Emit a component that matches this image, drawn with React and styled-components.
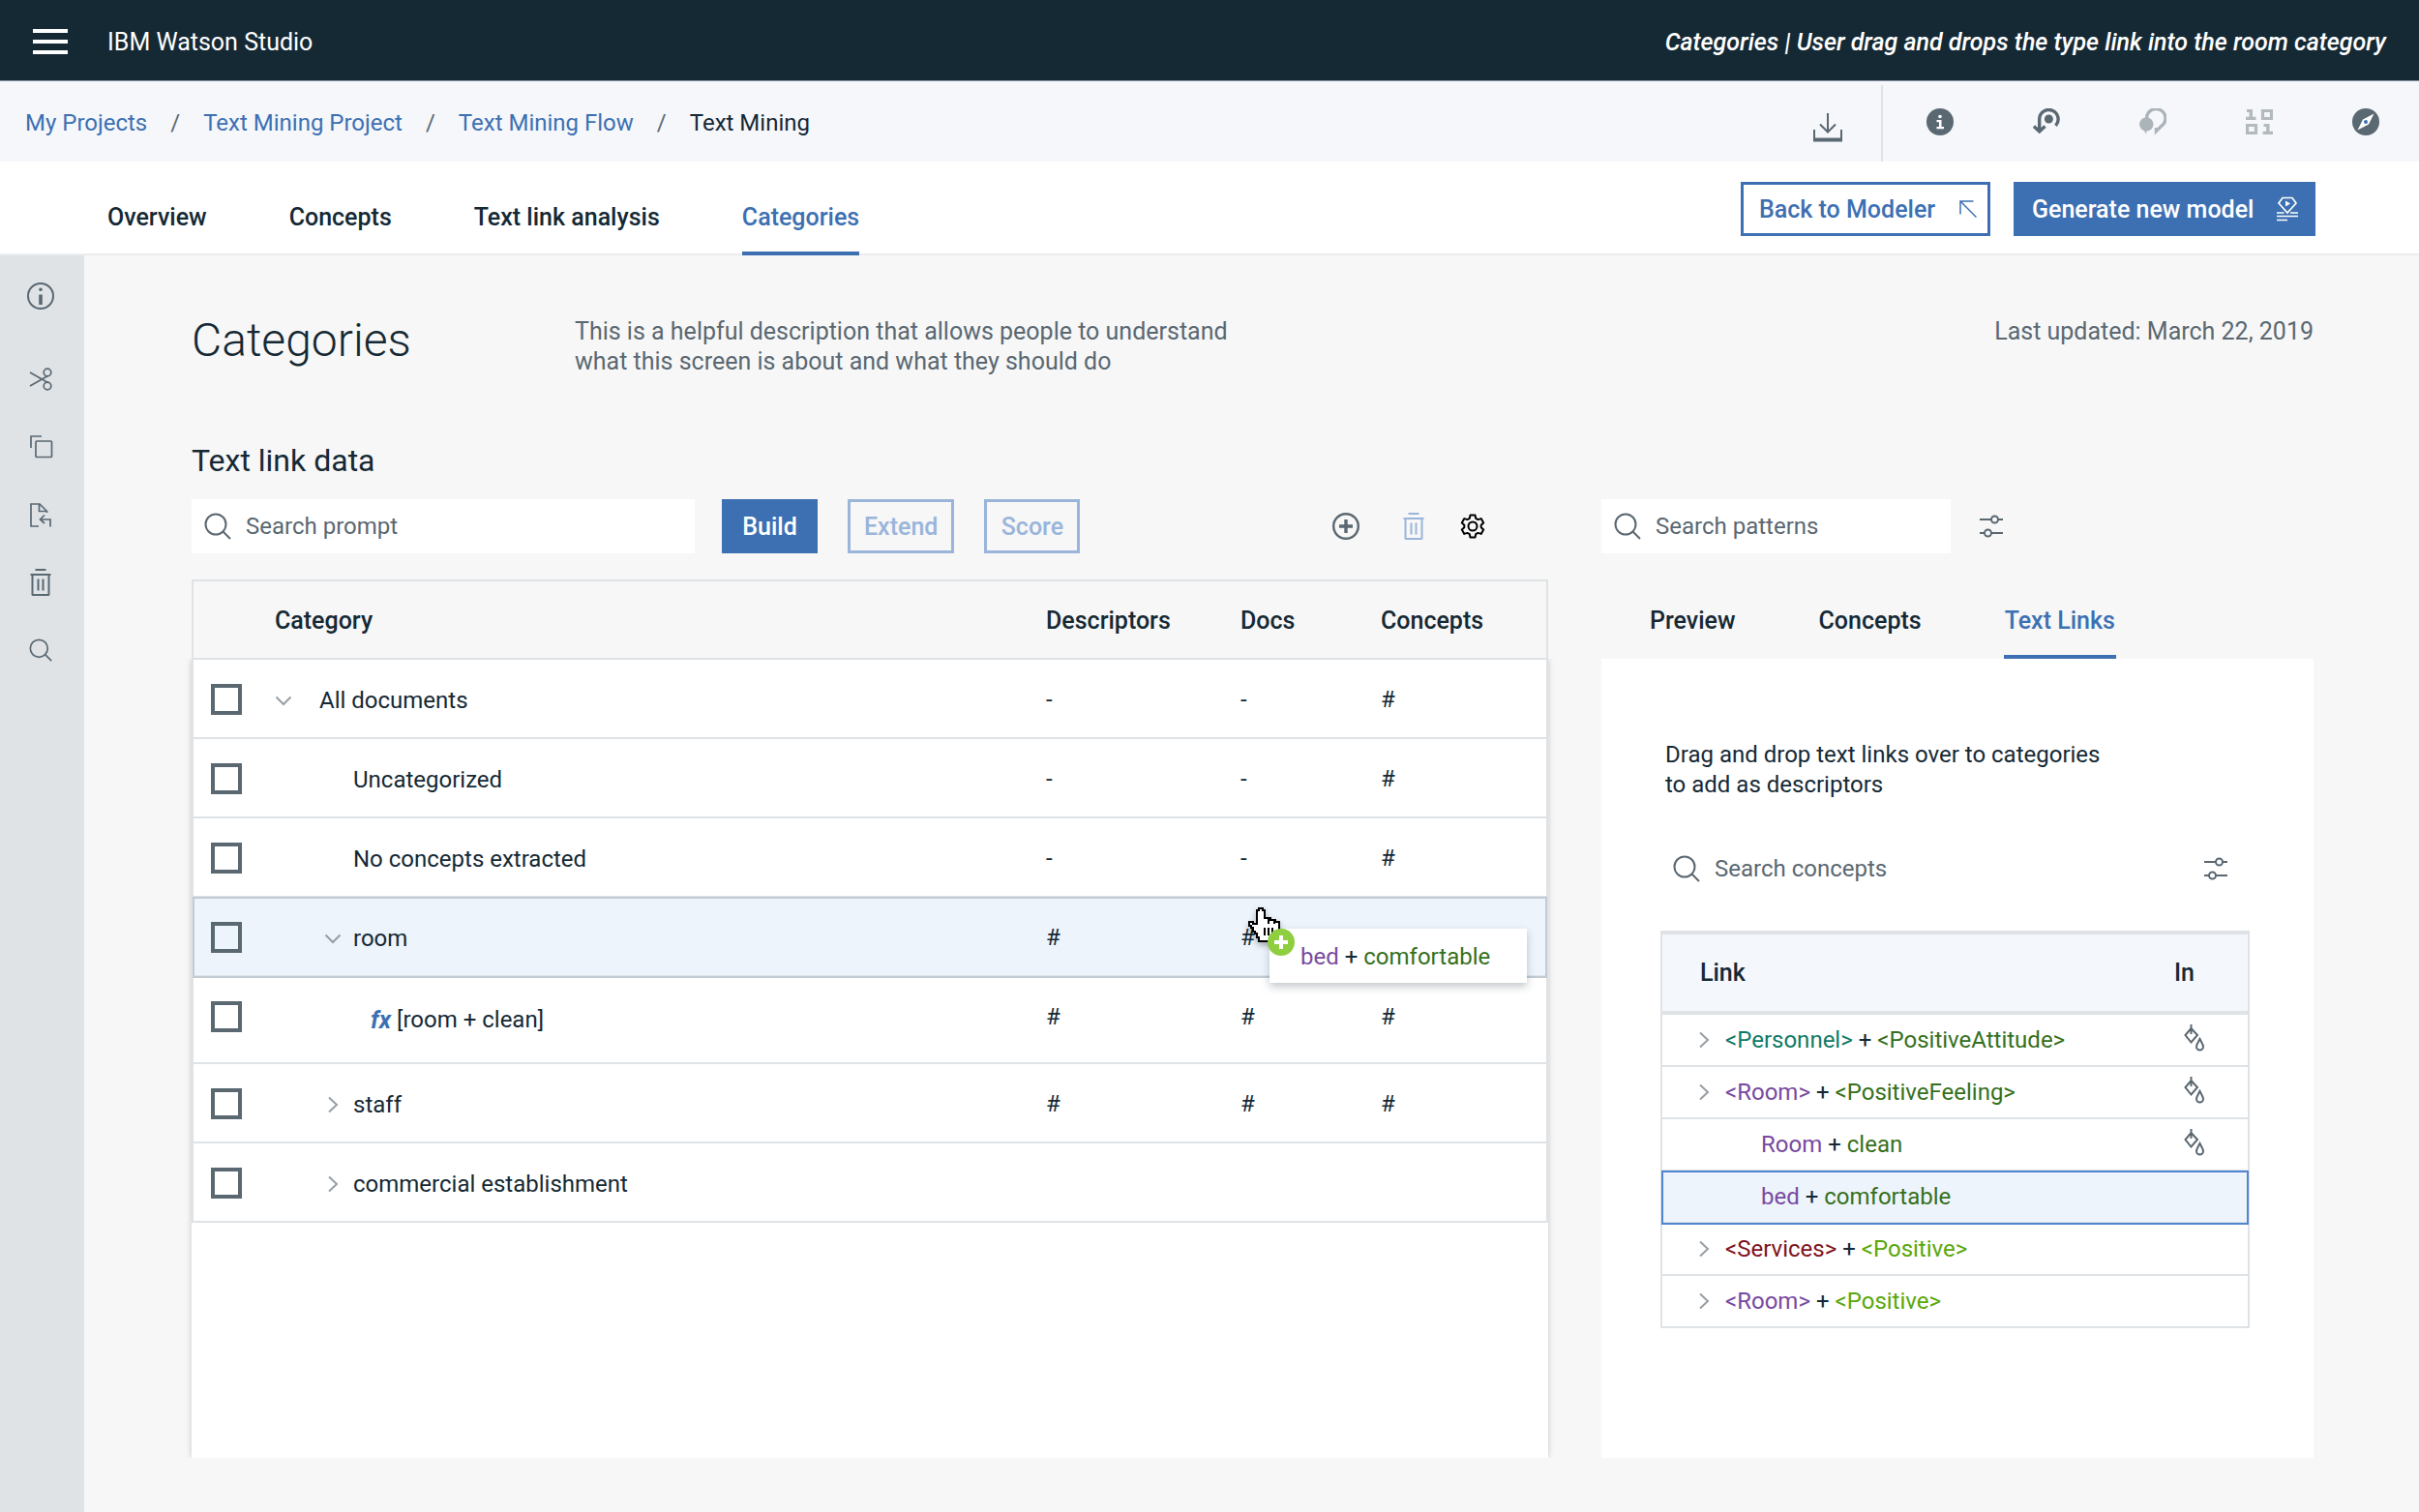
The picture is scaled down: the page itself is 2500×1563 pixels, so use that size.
import React from "react";
import styled, { createGlobalStyle, css } from "styled-components";

const color = {
  ink: "#152935",
  muted: "#5a6872",
  blue: "#3d70b2",
  blueSoft: "#9ab5da",
  line: "#dfe3e6",
  page: "#f7f7f7",
  bar: "#f5f7fb",
  selected: "#edf4fc",
  purple: "#784a9f",
  green: "#36701c",
  teal: "#107a66",
  red: "#7f1220",
  lime: "#5aa70a",
};

const GlobalStyle = createGlobalStyle`
  *, *::before, *::after { box-sizing: border-box; }
  body { margin: 0; background: ${color.page}; }
  body, button, input { font-family: Roboto, "Liberation Sans", sans-serif; }
  body { font-size: 24px; line-height: 31px; color: ${color.ink}; }
  svg { display: block; flex: none; }
`;

const Page = styled.div`
  min-height: 100vh;
  display: flex;
  flex-direction: column;
`;

const bareButton = css`
  appearance: none;
  border: 0;
  margin: 0;
  padding: 0;
  background: none;
  color: inherit;
  cursor: pointer;
  display: inline-flex;
  align-items: center;
  justify-content: center;
`;

/* Header */
const TopBar = styled.header`
  height: 84px;
  padding: 3px 34px 0;
  display: flex;
  align-items: center;
  background: ${color.ink};
  color: #fff;
  font-size: 25px;
  border-bottom: 1px solid #8a98a3;
`;

const MenuButton = styled.button`
  ${bareButton}
  margin-right: 41px;
`;

const Product = styled.span`
  flex: 1;
`;

const Caption = styled.span`
  font-style: italic;
  font-weight: 500;
`;

const CrumbBar = styled.div`
  height: 83px;
  padding-left: 26px;
  display: flex;
  align-items: center;
  background: ${color.bar};
`;

const Crumbs = styled.ol`
  list-style: none;
  flex: 1;
  margin: 0;
  padding: 4px 0 0;
  display: flex;

  li + li::before {
    content: "/";
    margin: 0 24px;
    color: ${color.muted};
  }
  a {
    color: ${color.blue};
    text-decoration: none;
  }
`;

const IconButton = styled.button`
  ${bareButton}
  color: ${(p) => p.$tone || color.muted};
  width: ${(p) => p.$size || 28}px;
  height: ${(p) => p.$size || 28}px;
`;

const Download = styled(IconButton)`
  width: 30px;
  height: 30px;
  margin: 12px 40px 0 0;
`;

const HeaderTools = styled.div`
  align-self: stretch;
  margin-top: 4px;
  padding: 0 41px 4px 45px;
  display: flex;
  align-items: center;
  gap: 82px;
  border-left: 2px solid ${color.line};
`;

/* Tabs */
const TabBar = styled.div`
  height: 97px;
  padding: 0 107px 0 111px;
  display: flex;
  align-items: flex-end;
  background: #fff;
  border-bottom: 2px solid #ebedee;
`;

const Tabs = styled.nav`
  flex: 1;
  display: flex;
  gap: 85px;
  margin-bottom: -2px;
`;

const tabText = css`
  font-size: 25px;
  line-height: 31px;
  font-weight: 500;
  color: ${(p) => (p.$active ? color.blue : color.ink)};
  border-bottom: 4px solid ${(p) => (p.$active ? color.blue : "transparent")};
`;

const TabLink = styled.a`
  ${tabText}
  padding-bottom: 20px;
  text-decoration: none;
`;

const Actions = styled.div`
  display: flex;
  gap: 24px;
  margin-bottom: 18px;
`;

const Button = styled.button`
  ${bareButton}
  height: 56px;
  min-width: 99px;
  padding: 0 14px;
  font-size: 25px;
  font-weight: 500;
  border: 3px solid ${(p) => (p.disabled ? color.blueSoft : color.blue)};
  background: ${(p) => (p.$primary ? color.blue : "transparent")};
  color: ${(p) => (p.$primary ? "#fff" : p.disabled ? color.blueSoft : color.blue)};
`;

const WideButton = styled(Button)`
  min-width: ${(p) => p.$min}px;
  padding: 0 ${(p) => p.$end}px 0 16px;
  justify-content: space-between;
`;

/* Body */
const Body = styled.div`
  flex: 1;
  display: flex;
`;

const Sidebar = styled.nav`
  width: 87px;
  padding: 28px 0 0 28px;
  display: flex;
  flex-direction: column;
  align-items: flex-start;
  gap: 42px;
  background: ${color.line};
`;

const SidebarInfo = styled(IconButton)`
  margin-bottom: 16px;
`;

const Main = styled.main`
  flex: 1;
  min-width: 0;
  padding: 63px 109px 56px 111px;
  display: flex;
  flex-direction: column;
`;

const Hero = styled.div`
  display: flex;
  align-items: flex-start;
  font-size: 25px;
  color: ${color.muted};
`;

const Title = styled.h1`
  margin: 0;
  width: 396px;
  font-size: 48px;
  line-height: 50px;
  font-weight: 300;
  color: ${color.ink};
`;

const Lead = styled.p`
  margin: 0;
  max-width: 700px;
`;

const Updated = styled.span`
  margin-left: auto;
`;

const SectionTitle = styled.h2`
  margin: 69px 0 22px;
  font-size: 32px;
  line-height: 36px;
  font-weight: 400;
`;

const Columns = styled.div`
  flex: 1;
  display: grid;
  grid-template-columns: minmax(0, 1402fr) minmax(0, 736fr);
  column-gap: 55px;
`;

const Column = styled.section`
  min-width: 0;
  display: flex;
  flex-direction: column;
`;

const Toolbar = styled.div`
  height: 56px;
  margin-bottom: 27px;
  padding-right: ${(p) => p.$end || 0}px;
  display: flex;
  align-items: center;
`;

const ButtonRow = styled.div`
  flex: 1;
  display: flex;
  gap: 31px;
  margin-left: 28px;
`;

const ToolIcons = styled.div`
  display: flex;
  align-items: center;
  gap: 34px;
`;

const AddButton = styled(IconButton)`
  margin-right: 8px;
`;

const SearchBox = styled.label`
  width: ${(p) => p.$width};
  height: 56px;
  padding-left: 13px;
  display: flex;
  align-items: center;
  gap: 15px;
  background: #fff;
  color: ${color.muted};
`;

const SearchInput = styled.input`
  flex: 1;
  min-width: 0;
  border: 0;
  padding: 0;
  outline: 0;
  background: transparent;
  font-size: 24px;
  color: ${color.ink};
  &::placeholder {
    color: ${color.muted};
    opacity: 1;
  }
`;

/* Category table */
const Card = styled.div`
  flex: 1;
  position: relative;
  z-index: 0;
  &::before {
    content: "";
    position: absolute;
    z-index: -1;
    inset: 82px 0 0;
    background: #fff;
    box-shadow: 0 0 6px rgba(21, 41, 53, 0.22);
    clip-path: inset(0 -8px 0 -8px);
  }
`;

const CategoryTable = styled.table`
  width: 100%;
  table-layout: fixed;
  border-spacing: 0;
  border: 2px solid ${color.line};
  border-bottom: 0;
  text-align: left;

  th {
    height: 81px;
    padding: 2px 0 0;
    font-size: 25px;
    font-weight: 500;
    background: ${color.page};
    border-bottom: 2px solid ${color.line};
  }
`;

const Row = styled.tr`
  td {
    height: ${(p) => (p.$tall ? 90 : 82)}px;
    padding: 2px 0 ${(p) => (p.$tall ? 8 : 0)}px;
    border-bottom: 2px solid ${color.line};
    background: ${(p) => (p.$selected ? color.selected : "transparent")};
  }
  outline: ${(p) => (p.$selected ? "2px solid #c3cbd3" : "0")};
  outline-offset: -1px;
`;

const Check = styled.input`
  appearance: none;
  display: block;
  width: 32px;
  height: 32px;
  margin: 0 0 0 18px;
  border: 4px solid ${color.muted};
  cursor: pointer;
`;

const Label = styled.div`
  display: flex;
  align-items: center;
  gap: 12px;
  margin-top: ${(p) => (p.$low ? 6 : 2)}px;
  padding-left: ${(p) => p.$indent}px;
`;

const Expander = styled.button`
  ${bareButton}
  width: 18px;
  height: 18px;
  margin-right: ${(p) => p.$gap || 0}px;
  color: #979fa5;
`;

const Fx = styled.span`
  font-size: 25px;
  font-style: italic;
  font-weight: 700;
  color: ${color.blue};
  margin-right: -6px;
`;

const DragChip = styled.div`
  position: absolute;
  top: 361px;
  right: 22px;
  width: 266px;
  height: 56px;
  padding: 2px 0 0 32px;
  display: flex;
  align-items: center;
  background: #fff;
  box-shadow: 0 4px 8px rgba(21, 41, 53, 0.25);
  white-space: pre;
`;

const Cursor = styled.svg`
  position: absolute;
  left: -24px;
  top: -22px;
  filter: drop-shadow(0 3px 3px rgba(0, 0, 0, 0.3));
`;

const AddBadge = styled.svg`
  position: absolute;
  left: -2px;
  top: 0;
`;

/* Right panel */
const PanelTabs = styled.div`
  height: 82px;
  padding-left: 49px;
  display: flex;
  align-items: flex-end;
  gap: 84px;
`;

const PanelTab = styled.button`
  ${bareButton}
  ${tabText}
  padding: 0 1px 20px;
`;

const Panel = styled.div`
  flex: 1;
  padding: 84px 66px 0 61px;
  background: #fff;
`;

const Hint = styled.p`
  margin: 0 0 43px;
  padding-left: 5px;
  max-width: 480px;
`;

const PanelSearch = styled.div`
  display: flex;
  align-items: center;
  padding-right: 22px;
  margin-bottom: 36px;
`;

const LinkTable = styled.table`
  width: 100%;
  table-layout: fixed;
  border-spacing: 0;
  border: 2px solid ${color.line};
  border-top-width: 4px;
  border-bottom: 0;
  text-align: left;

  th {
    height: 83px;
    padding: 0;
    font-size: 25px;
    font-weight: 500;
    background: #f4f7fc;
    border-bottom: 4px solid ${color.line};
  }
  th:first-child {
    padding-left: 39px;
  }
`;

const LinkRow = styled.tr`
  td {
    height: 54px;
    padding: 0;
    border-bottom: 2px solid ${color.line};
    background: ${(p) => (p.$selected ? color.selected : "transparent")};
  }
  outline: ${(p) => (p.$selected ? "2px solid #4f86cf" : "0")};
  outline-offset: -1px;
`;

const LinkCell = styled.div`
  display: flex;
  align-items: center;
  gap: 13px;
  padding-left: ${(p) => (p.$child ? 102 : 34)}px;
`;

const UseMark = styled.span`
  display: block;
  padding: 0 0 4px 10px;
  color: ${color.muted};
`;

const Term = styled.span`
  color: ${(p) => color[p.$tone]};
`;

const stroke = { fill: "none", stroke: "currentColor", strokeWidth: 2 };

const SearchIcon = ({ size = 28 }) => (
  <svg width={size} height={size} viewBox="0 0 28 28" {...stroke}>
    <circle cx="12" cy="12" r="10.5" />
    <path d="M19.5 19.5L27 27" />
  </svg>
);

const TrashIcon = () => (
  <svg width="28" height="28" viewBox="0 0 28 28" {...stroke}>
    <path d="M8.5 1h11M3.5 6h21M5.5 6v20.5q0 .5.5.5h16q.5 0 .5-.5V6M11.5 10.5v12M16.5 10.5v12" />
  </svg>
);

const SlidersIcon = () => (
  <svg width="24" height="24" viewBox="0 0 24 24" {...stroke}>
    <path d="M0 5h12M19 5h5M0 19h5M12 19h12" />
    <circle cx="15.5" cy="5" r="3.5" />
    <circle cx="8.5" cy="19" r="3.5" />
  </svg>
);

const Chevron = ({ open }) => (
  <svg width="18" height="18" viewBox="0 0 18 18" {...stroke}>
    <path d={open ? "M1.5 5.5L9 13l7.5-7.5" : "M5 1.5L13 9l-8 7.5"} />
  </svg>
);

const BucketIcon = () => (
  <svg width="22" height="28" viewBox="0 0 22 28" {...stroke}>
    <path d="M7.5 4L14 11l-6.5 7.5L1.5 11zM7.5 0v10" />
    <path d="M16.5 15c1.5 3 3.5 5.5 3.5 8a3.5 3.5 0 0 1-7 0c0-2.5 2-5 3.500-8z" />
  </svg>
);

const CategoryRow = ({ name, depth, open, fx, values, tall, selected }) => (
  <Row $tall={tall} $selected={selected}>
    <td>
      <Check type="checkbox" aria-label={`Select ${name}`} />
    </td>
    <td>
      <Label $indent={depth} $low={tall}>
        {open !== undefined && (
          <Expander
            aria-label={`${open ? "Collapse" : "Expand"} ${name}`}
            aria-expanded={open}
            $gap={depth ? 0 : 16}
          >
            <Chevron open={open} />
          </Expander>
        )}
        {fx && <Fx>fx</Fx>}
        <span>{name}</span>
      </Label>
    </td>
    {values.map((value, i) => (
      <td key={i}>{value}</td>
    ))}
  </Row>
);

const categories = [
  { name: "All documents", depth: 0, open: true, values: ["-", "-", "#"] },
  { name: "Uncategorized", depth: 81, values: ["-", "-", "#"] },
  { name: "No concepts extracted", depth: 81, values: ["-", "-", "#"] },
  { name: "room", depth: 51, open: true, values: ["#", "#", ""], selected: true },
  { name: "[room + clean]", depth: 99, fx: true, values: ["#", "#", "#"], tall: true },
  { name: "staff", depth: 51, open: false, values: ["#", "#", "#"] },
  { name: "commercial establishment", depth: 51, open: false, values: ["", "", ""] },
];

const links = [
  { from: ["<Personnel>", "teal"], to: ["<PositiveAttitude>", "green"], used: true },
  { from: ["<Room>", "purple"], to: ["<PositiveFeeling>", "green"], used: true },
  { from: ["Room", "purple"], to: ["clean", "green"], used: true, child: true },
  { from: ["bed", "purple"], to: ["comfortable", "green"], child: true, selected: true },
  { from: ["<Services>", "red"], to: ["<Positive>", "lime"] },
  { from: ["<Room>", "purple"], to: ["<Positive>", "lime"] },
];

const Pair = ({ from, to }) => (
  <span>
    <Term $tone={from[1]}>{from[0]}</Term> + <Term $tone={to[1]}>{to[0]}</Term>
  </span>
);

export default function App() {
  return (
    <Page>
      <GlobalStyle />
      <TopBar>
        <MenuButton aria-label="Menu">
          <svg width="36" height="26" viewBox="0 0 36 26" fill="currentColor">
            <path d="M0 0h36v4H0zM0 11h36v4H0zM0 22h36v4H0z" />
          </svg>
        </MenuButton>
        <Product>IBM Watson Studio</Product>
        <Caption>Categories | User drag and drops the type link into the room category</Caption>
      </TopBar>

      <CrumbBar>
        <Crumbs>
          <li><a href="#projects">My Projects</a></li>
          <li><a href="#project">Text Mining Project</a></li>
          <li><a href="#flow">Text Mining Flow</a></li>
          <li aria-current="page">Text Mining</li>
        </Crumbs>
        <Download aria-label="Download">
          <svg width="30" height="30" viewBox="0 0 30 30" {...stroke}>
            <path d="M15 0v19M7 11.5l8 8 8-8M1 17v10M29 17v10" />
            <path d="M0 27.5h30" strokeWidth="4" />
          </svg>
        </Download>
        <HeaderTools>
          <IconButton aria-label="Information">
            <svg width="28" height="28" viewBox="0 0 28 28">
              <circle cx="14" cy="14" r="14" fill="currentColor" />
              <circle cx="14" cy="8.5" r="1.8" fill="#fff" />
              <path d="M10.5 12h5v7H18v2.2h-7.5V19H13v-4.8h-2.5z" fill="#fff" />
            </svg>
          </IconButton>
          <IconButton aria-label="History">
            <svg width="28" height="28" viewBox="0 0 28 28" {...stroke} strokeWidth="3.4">
              <path d="M6.7 24V11A9.7 9.7 0 1 1 23.5 17.8M1 18.5l5.7 5.5 5.8-5.5" />
              <circle cx="16.4" cy="11" r="4.5" fill="currentColor" stroke="none" />
            </svg>
          </IconButton>
          <IconButton aria-label="Comments" $tone="#abb4b9">
            <svg width="28" height="28" viewBox="0 0 28 28" fill="currentColor">
              <path
                d="M7.6 10A9.7 9.7 0 1 1 22.5 18.5L17.5 23.500V20"
                fill="none"
                stroke="currentColor"
                strokeWidth="3.4"
              />
              <circle cx="7.3" cy="16.5" r="7.2" />
              <path d="M4 21l3.200 6v-4l5-3z" />
            </svg>
          </IconButton>
          <IconButton aria-label="Data" $tone="#b3babd">
            <svg width="28" height="28" viewBox="0 0 28 28" fill="currentColor">
              <path d="M1 1h6v7.8h3.5V12H0V8.8h3.6V4H1zM18.5 16h6v7.8H28V27H17.5v-3.2h3.6V19h-2.6z" />
              <path
                d="M17.5 2.5h9v8h-9zM1.5 17.5h9v8h-9z"
                fill="none"
                stroke="currentColor"
                strokeWidth="3.2"
              />
            </svg>
          </IconButton>
          <IconButton aria-label="Explore">
            <svg width="28" height="28" viewBox="0 0 28 28">
              <circle cx="14" cy="14" r="14" fill="currentColor" />
              <path d="M22.5 5.5L17 16.5 5.5 22.5 11 11.5z" fill="#fff" />
              <circle cx="14" cy="14" r="2" fill={color.blue} />
            </svg>
          </IconButton>
        </HeaderTools>
      </CrumbBar>

      <TabBar>
        <Tabs aria-label="Sections">
          <TabLink href="#overview">Overview</TabLink>
          <TabLink href="#concepts">Concepts</TabLink>
          <TabLink href="#tla">Text link analysis</TabLink>
          <TabLink href="#categories" $active aria-current="page">Categories</TabLink>
        </Tabs>
        <Actions>
          <WideButton $min={258} $end={11}>
            Back to Modeler
            <svg width="18" height="18" viewBox="0 0 18 18" {...stroke} strokeWidth="1.5">
              <path d="M1 14.5V1h13.5M1 1l16.5 16.5" />
            </svg>
          </WideButton>
          <WideButton $primary $min={312} $end={15}>
            Generate new model
            <svg width="22" height="26" viewBox="0 0 22 26" {...stroke} strokeWidth="1.7">
              <path d="M6 1.500h10l4 5.500-9 10L2 7z" />
              <path d="M9 4.500l5 3-5 3z" fill="currentColor" stroke="none" />
              <path d="M0 17h7.5M14 17h8M0 20.5h22M0 24.5h11" />
            </svg>
          </WideButton>
        </Actions>
      </TabBar>

      <Body>
        <Sidebar aria-label="Tools">
          <SidebarInfo aria-label="Details">
            <svg width="28" height="28" viewBox="0 0 28 28" {...stroke}>
              <circle cx="14" cy="14" r="13" />
              <path d="M14 12.5V23" strokeWidth="3.6" />
              <circle cx="14" cy="7.3" r="1.8" fill="currentColor" stroke="none" />
            </svg>
          </SidebarInfo>
          <IconButton aria-label="Cut">
            <svg width="28" height="28" viewBox="0 0 28 28" {...stroke} strokeWidth="1.7">
              <path d="M3 7l18.5 10.5M3 21l18.5-10.5" />
              <circle cx="21" cy="7" r="3.8" />
              <circle cx="21" cy="21" r="3.8" />
            </svg>
          </IconButton>
          <IconButton aria-label="Copy">
            <svg width="28" height="28" viewBox="0 0 28 28" {...stroke} strokeWidth="1.7">
              <path d="M15 3H4v12" />
              <rect x="9" y="8" width="16.5" height="16.5" rx="1" />
            </svg>
          </IconButton>
          <IconButton aria-label="Paste">
            <svg width="28" height="28" viewBox="0 0 28 28" {...stroke} strokeWidth="1.7">
              <path d="M12 26H4V3h9l7.5 7.5V12M12.5 3v7.5h8M24 26.5V19H14M18 14.5L13.5 19l4.5 4" />
            </svg>
          </IconButton>
          <IconButton aria-label="Delete"><TrashIcon /></IconButton>
          <IconButton aria-label="Find"><SearchIcon size={24} /></IconButton>
        </Sidebar>

        <Main>
          <Hero>
            <Title>Categories</Title>
            <Lead>
              This is a helpful description that allows people to understand what this screen is
              about and what they should do
            </Lead>
            <Updated>Last updated: March 22, 2019</Updated>
          </Hero>

          <SectionTitle>Text link data</SectionTitle>

          <Columns>
            <Column>
              <Toolbar $end={65}>
                <SearchBox $width="520px">
                  <SearchIcon />
                  <SearchInput type="search" placeholder="Search prompt" aria-label="Search prompt" />
                </SearchBox>
                <ButtonRow>
                  <Button $primary>Build</Button>
                  <Button disabled>Extend</Button>
                  <Button disabled>Score</Button>
                </ButtonRow>
                <ToolIcons>
                  <AddButton aria-label="Add category">
                    <svg width="28" height="28" viewBox="0 0 28 28" {...stroke}>
                      <circle cx="14" cy="14" r="12.8" strokeWidth="2.4" />
                      <path d="M14 7v14M7 14h14" strokeWidth="3.4" />
                    </svg>
                  </AddButton>
                  <IconButton aria-label="Delete category" $tone={color.blueSoft} disabled>
                    <TrashIcon />
                  </IconButton>
                  <IconButton aria-label="Settings" $tone="#000" $size={26}>
                    <svg width="26" height="26" viewBox="0 0 26 26" {...stroke} strokeLinejoin="round">
                      <path d="M10.5 1.5h5l.7 3.3 2.3 1.3 3.2-1 2.5 4.3-2.5 2.3v2.6l2.5 2.3-2.5 4.3-3.2-1-2.3 1.3-.7 3.3h-5l-.7-3.3-2.3-1.3-3.2 1-2.5-4.3 2.5-2.3v-2.6L1.8 9.4l2.5-4.3 3.2 1 2.3-1.3z" />
                      <circle cx="13" cy="13" r="4.5" />
                    </svg>
                  </IconButton>
                </ToolIcons>
              </Toolbar>

              <Card>
                <CategoryTable>
                  <colgroup>
                    <col width="84" />
                    <col />
                    <col width="201" />
                    <col width="145" />
                    <col width="171" />
                  </colgroup>
                  <thead>
                    <tr>
                      <th aria-label="Selection" />
                      <th>Category</th>
                      <th>Descriptors</th>
                      <th>Docs</th>
                      <th>Concepts</th>
                    </tr>
                  </thead>
                  <tbody>
                    {categories.map((row) => (
                      <CategoryRow key={row.name} {...row} />
                    ))}
                  </tbody>
                </CategoryTable>

                <DragChip>
                  <Cursor width="38" height="38" viewBox="0 0 38 38" shapeRendering="crispEdges">
                    <path
                      d="M11 3h2V1h4v2h2v8h6v2h5v2h4v10h-2v4h-2v6H13v-4h-2v-4H9v-2H7v-4H5v-2H3v-4h4v2h4z"
                      fill="#fff"
                      stroke="#000"
                      strokeWidth="2"
                    />
                    <path d="M19 21v8M23 21v8M27 21v8M23 12v5M29 13v4" stroke="#000" strokeWidth="2" />
                  </Cursor>
                  <AddBadge width="28" height="28" viewBox="0 0 28 28">
                    <circle cx="14" cy="14" r="14" fill="#8fce3f" />
                    <path d="M14 7v14M7 14h14" stroke="#fff" strokeWidth="4" />
                  </AddBadge>
                  <Pair from={["bed", "purple"]} to={["comfortable", "green"]} />
                </DragChip>
              </Card>
            </Column>

            <Column>
              <Toolbar>
                <SearchBox $width="361px">
                  <SearchIcon />
                  <SearchInput type="search" placeholder="Search patterns" aria-label="Search patterns" />
                </SearchBox>
                <ButtonRow>
                  <IconButton aria-label="Filter patterns"><SlidersIcon /></IconButton>
                </ButtonRow>
              </Toolbar>

              <PanelTabs role="tablist">
                <PanelTab role="tab" aria-selected="false">Preview</PanelTab>
                <PanelTab role="tab" aria-selected="false">Concepts</PanelTab>
                <PanelTab role="tab" aria-selected="true" $active>Text Links</PanelTab>
              </PanelTabs>

              <Panel role="tabpanel">
                <Hint>Drag and drop text links over to categories to add as descriptors</Hint>
                <PanelSearch>
                  <SearchBox $width="100%">
                    <SearchIcon />
                    <SearchInput type="search" placeholder="Search concepts" aria-label="Search concepts" />
                  </SearchBox>
                  <IconButton aria-label="Filter concepts"><SlidersIcon /></IconButton>
                </PanelSearch>
                <LinkTable>
                  <colgroup>
                    <col />
                    <col width="76" />
                  </colgroup>
                  <thead>
                    <tr>
                      <th>Link</th>
                      <th>In</th>
                    </tr>
                  </thead>
                  <tbody>
                    {links.map(({ from, to, used, child, selected }) => (
                      <LinkRow key={from[0] + to[0]} $selected={selected}>
                        <td>
                          <LinkCell $child={child}>
                            {!child && (
                              <Expander aria-label={`Expand ${from[0]} + ${to[0]}`} aria-expanded="false">
                                <Chevron />
                              </Expander>
                            )}
                            <Pair from={from} to={to} />
                          </LinkCell>
                        </td>
                        <td>
                          {used && (
                            <UseMark role="img" aria-label="In use">
                              <BucketIcon />
                            </UseMark>
                          )}
                        </td>
                      </LinkRow>
                    ))}
                  </tbody>
                </LinkTable>
              </Panel>
            </Column>
          </Columns>
        </Main>
      </Body>
    </Page>
  );
}
